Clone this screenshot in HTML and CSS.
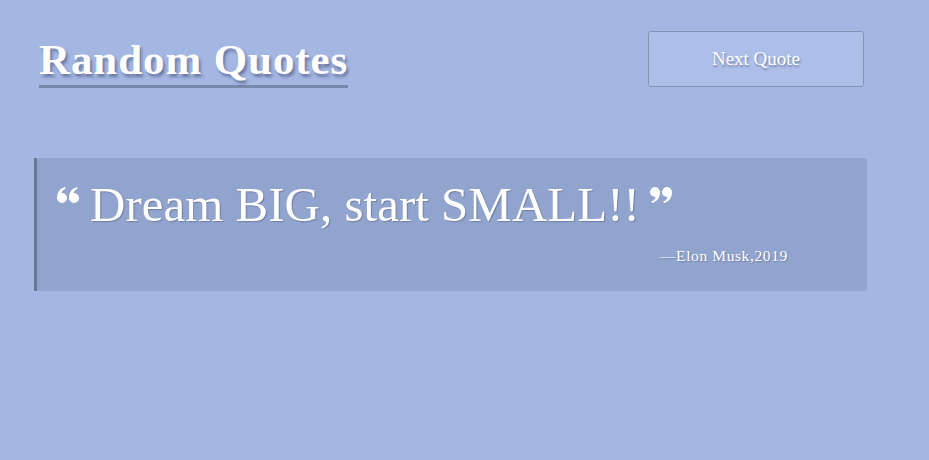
FILE: index.html
```html
<!DOCTYPE html>
<html>
<head>
<meta charset="utf-8">
<link rel="stylesheet" href="styles.css">
</head>
<body>
<div class="page">
  <header class="top">
    <h1 class="title">Random Quotes</h1>
    <button class="next">Next Quote</button>
  </header>
  <section class="quote">
    <p class="text">
      <svg class="qmark open" viewBox="0 0 22 16" width="22" height="16"><path d="M0 11C0 5 3 1.5 8 0l.6 1.4C5.6 3 4.6 5 4.4 6.05A5 5 0 1 1 0 11Z"/><path transform="translate(12 0)" d="M0 11C0 5 3 1.5 8 0l.6 1.4C5.6 3 4.6 5 4.4 6.05A5 5 0 1 1 0 11Z"/></svg><span class="words">Dream BIG, start SMALL!!</span><svg class="qmark close" viewBox="0 0 22 16" width="22" height="16"><g transform="rotate(180 11 8)"><path d="M0 11C0 5 3 1.5 8 0l.6 1.4C5.6 3 4.6 5 4.4 6.05A5 5 0 1 1 0 11Z"/><path transform="translate(12 0)" d="M0 11C0 5 3 1.5 8 0l.6 1.4C5.6 3 4.6 5 4.4 6.05A5 5 0 1 1 0 11Z"/></g></svg>
    </p>
    <p class="author">—Elon Musk,2019</p>
  </section>
</div>
</body>
</html>
```
FILE: styles.css
```css
html, body {
  margin: 0;
  padding: 0;
  background: #a4b7e2;
  height: 100%;
}
.page {
  font-family: "Liberation Serif", "DejaVu Serif", serif;
  color: #fff;
  padding: 31px 0 0 34px;
  width: 833px;
}
.top {
  display: flex;
  justify-content: space-between;
  align-items: flex-start;
}
.title {
  margin: 6px 0 0 5px;
  font-size: 43px;
  font-weight: bold;
  line-height: 46px;
  padding-bottom: 2px;
  border-bottom: 3px solid #7888aa;
  text-shadow: 2px 3px 3px rgba(60, 70, 110, 0.55);
  letter-spacing: 0.9px;
}
.next {
  width: 216px;
  height: 56px;
  margin-right: 3px;
  background: #adbfe8;
  border: 1px solid #8591b2;
  border-radius: 3px;
  color: #fff;
  font-family: "Liberation Serif", "DejaVu Serif", serif;
  font-size: 19px;
  text-shadow: 1px 2px 2px rgba(60, 70, 110, 0.5);
  padding: 0;
}
.quote {
  margin-top: 70px;
  height: 133px;
  box-sizing: border-box;
  background: #91a4cd;
  border-left: 3px solid #6a7795;
  border-radius: 0 3px 3px 0;
  padding: 21px 0 0 18px;
}
.text {
  margin: 0;
  display: flex;
  align-items: flex-start;
  font-size: 49px;
  line-height: 52px;
  text-shadow: 1px 1px 1px rgba(70, 80, 120, 0.45);
}
.qmark {
  fill: #fff;
  flex: none;
}
.qmark.open {
  margin: 8px 11px 0 2px;
}
.qmark.close {
  margin: 8px 0 0 10px;
}
.author {
  margin: 16px 0 0 0;
  padding-left: 605px;
  font-size: 15.5px;
  letter-spacing: 0.6px;
  text-shadow: 1px 1px 1px rgba(70, 80, 120, 0.45);
}
```
